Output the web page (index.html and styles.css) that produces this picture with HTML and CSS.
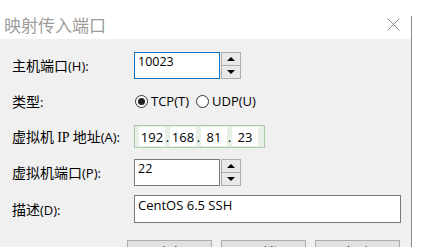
FILE: index.html
```html
<!DOCTYPE html>
<html lang="zh-CN">
<head>
    <meta charset="UTF-8">
    <title>映射传入端口</title>
    <link rel="stylesheet" href="styles.css">
</head>
<body>
    <div class="page">
        <div class="dialog">
            <div class="titlebar">
                <span class="title">映射传入端口</span>
                <svg class="close" width="13" height="13" viewBox="0 0 13 13">
                    <path d="M0.5 0.5 L12.5 12.5 M12.5 0.5 L0.5 12.5" stroke="#8a8a8a" stroke-width="1" fill="none"/>
                </svg>
            </div>

            <div class="body">
                <!-- 主机端口 -->
                <div class="row row-host">
                    <span class="label">主机端口<span class="latin">(H):</span></span>
                    <div class="spin-field">
                        <div class="text-box focused short">10023</div>
                        <div class="spinner">
                            <span class="spin-btn"><span class="arrow-up"></span></span>
                            <span class="spin-btn"><span class="arrow-down"></span></span>
                        </div>
                    </div>
                </div>

                <!-- 类型 -->
                <div class="row row-type">
                    <span class="label">类型<span class="latin">:</span></span>
                    <div class="radios">
                        <span class="radio checked"></span><span class="radio-text">TCP(T)</span>
                        <span class="radio"></span><span class="radio-text">UDP(U)</span>
                    </div>
                </div>

                <!-- 虚拟机 IP 地址 -->
                <div class="row row-ip">
                    <span class="label">虚拟机 <span class="serif">IP</span> 地址<span class="latin">(A):</span></span>
                    <div class="ip-box">
                        <span class="octet">192</span><span class="dot">.</span>
                        <span class="octet">168</span><span class="dot">.</span>
                        <span class="octet">81</span><span class="dot">.</span>
                        <span class="octet">23</span>
                    </div>
                </div>

                <!-- 虚拟机端口 -->
                <div class="row row-port">
                    <span class="label">虚拟机端口<span class="latin">(P):</span></span>
                    <div class="spin-field">
                        <div class="text-box short">22</div>
                        <div class="spinner">
                            <span class="spin-btn"><span class="arrow-up"></span></span>
                            <span class="spin-btn"><span class="arrow-down"></span></span>
                        </div>
                    </div>
                </div>

                <!-- 描述 -->
                <div class="row row-desc">
                    <span class="label">描述<span class="latin">(D):</span></span>
                    <div class="text-box wide">CentOS 6.5 SSH</div>
                </div>

                <div class="buttons">
                    <button class="btn">确定</button>
                    <button class="btn">取消</button>
                    <button class="btn">帮助</button>
                </div>
            </div>
        </div>
    </div>
</body>
</html>
```

FILE: styles.css
```css
/* Página */
body {
    margin: 0;
    background-color: #fff;
    font-family: "Noto Sans CJK SC", sans-serif;
    color: #000;
    overflow: hidden;
}

.page {
    padding-top: 16px;
}

/* Ventana del diálogo */
.dialog {
    width: 411px;
    border-right: 1px solid #8a8a8a;
}

.titlebar {
    height: 23px;
    display: flex;
    justify-content: space-between;
    align-items: flex-start;
    background-color: #fff;
}

.title {
    font-size: 17px;
    line-height: 17px;
    color: #9c9c9c;
    padding-left: 4px;
}

.close {
    margin: 2px 11px 0 0;
}

.body {
    background-color: #f0f0f0;
    height: 208px;
    box-sizing: border-box;
    padding: 13px 0 0 12px;
}

/* Filas del formulario */
.row {
    display: grid;
    grid-template-columns: 122px auto;
    align-items: center;
}

.row-host { height: 27px; }
.row-type { height: 24px; margin-top: 10px; }
.row-ip   { height: 23px; margin-top: 12px; }
.row-port { height: 27px; margin-top: 11px; }
.row-desc { height: 28px; margin-top: 9px; }

.label {
    font-size: 14px;
    line-height: 18px;
    white-space: nowrap;
}

.latin {
    font-family: "Open Sans", sans-serif;
    font-size: 13px;
}

.serif {
    font-family: "Liberation Serif", serif;
    font-size: 14px;
}

/* Campos de texto */
.text-box {
    box-sizing: border-box;
    background-color: #fff;
    border: 1px solid #7a7a7a;
    font-family: "Open Sans", sans-serif;
    font-size: 12.5px;
    line-height: 16px;
    padding: 1px 3px 0;
}

.text-box.focused {
    border-color: #0a72c2;
}

.short {
    width: 86px;
    height: 27px;
}

.wide {
    width: 267px;
    height: 28px;
    font-size: 13px;
}

.spin-field {
    display: flex;
    align-items: stretch;
}

.spinner {
    width: 20px;
    margin-left: 1px;
    box-sizing: border-box;
    border: 1px solid #adadad;
    display: flex;
    flex-direction: column;
    gap: 1px;
    background-color: #adadad;
}

.spin-btn {
    flex: 1;
    background-color: #e9e9e9;
    display: flex;
    align-items: center;
    justify-content: center;
}

.arrow-up {
    width: 0;
    height: 0;
    border-left: 4px solid transparent;
    border-right: 4px solid transparent;
    border-bottom: 4px solid #000;
}

.arrow-down {
    width: 0;
    height: 0;
    border-left: 4px solid transparent;
    border-right: 4px solid transparent;
    border-top: 4px solid #000;
}

/* Botones de opción */
.radios {
    display: flex;
    align-items: center;
    font-family: "Open Sans", sans-serif;
    font-size: 13px;
}

.radio {
    width: 13px;
    height: 13px;
    box-sizing: border-box;
    border: 1px solid #333;
    border-radius: 50%;
    background-color: #fff;
    margin-left: 1px;
    display: flex;
    align-items: center;
    justify-content: center;
}

.radio.checked::after {
    content: "";
    width: 7px;
    height: 7px;
    border-radius: 50%;
    background-color: #222;
}

.radio-text {
    margin: 0 6px 0 3px;
}

/* Dirección IP */
.ip-box {
    width: 131px;
    height: 23px;
    box-sizing: border-box;
    border: 1px solid #a9c9a9;
    background-color: #e6f0e6;
    display: flex;
    align-items: stretch;
    padding: 1px 4px;
    font-family: "Open Sans", sans-serif;
    font-size: 13px;
}

.octet {
    width: 26px;
    background-color: #fff;
    display: flex;
    align-items: center;
    justify-content: center;
}

.dot {
    width: 5px;
    display: flex;
    align-items: center;
    justify-content: center;
}

/* Botones inferiores */
.buttons {
    display: flex;
    gap: 9px;
    margin: 17px 0 0 115px;
}

.btn {
    width: 85px;
    height: 23px;
    background-color: #e1e1e1;
    border: 1px solid #adadad;
    font-family: "Noto Sans CJK SC", sans-serif;
    font-size: 13px;
    padding: 0;
}
```
